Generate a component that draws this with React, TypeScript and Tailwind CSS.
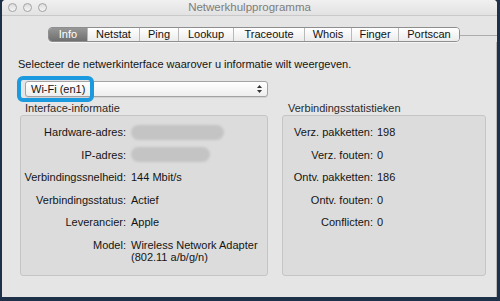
import React from "react";

const font = { fontFamily: '"Liberation Sans", Arial, sans-serif' };

const tabs = ["Info", "Netstat", "Ping", "Lookup", "Traceoute", "Whois", "Finger", "Portscan"];
const tabW = [38, 52, 39, 55, 71, 47, 47, 61];

function Blob({ w }: { w: number }) {
  return (
    <div className="h-[12px] flex items-center">
      <div
        className="h-[15px] rounded-full bg-[#c4c4c4] blur-[1px]"
        style={{ width: w }}
      />
    </div>
  );
}

export default function App() {
  const left: [string, React.ReactNode][] = [
    ["Hardware-adres:", <Blob w={93} />],
    ["IP-adres:", <Blob w={79} />],
    ["Verbindingssnelheid:", "144 Mbit/s"],
    ["Verbindingsstatus:", "Actief"],
    ["Leverancier:", "Apple"],
    [
      "Model:",
      <div>
        Wireless Network Adapter
        <br />
        (802.11 a/b/g/n)
      </div>,
    ],
  ];
  const right: [string, string][] = [
    ["Verz. pakketten:", "198"],
    ["Verz. fouten:", "0"],
    ["Ontv. pakketten:", "186"],
    ["Ontv. fouten:", "0"],
    ["Conflicten:", "0"],
  ];
  return (
    <div
      className="w-[500px] h-[301px] bg-[#1f3148] pl-[2px] pr-[3px] pb-[4px] flex text-[11px] text-[#141414]"
      style={font}
    >
      <div className="flex-1 flex flex-col bg-[#e5e5e5] rounded-t-[4px] overflow-hidden">
        {/* title bar */}
        <div className="h-[16px] shrink-0 bg-gradient-to-b from-[#f0f0f0] to-[#e2e2e2] border-b border-[#c9c9c9] flex items-center relative">
          <div className="flex gap-[6px] ml-[6px]">
            {[0, 1, 2].map((i) => (
              <div
                key={i}
                className="w-[9px] h-[9px] rounded-full border border-[#a2a2a2] bg-gradient-to-b from-[#dcdcdc] to-[#f6f6f6]"
              />
            ))}
          </div>
          <div className="absolute inset-0 flex items-center justify-center text-[11.5px] text-[#7d7d7d] leading-none">
            Netwerkhulpprogramma
          </div>
        </div>

        {/* tab bar */}
        <div className="mt-[11px] h-[15px] flex items-center">
          <div className="w-[46px]" />
          <div className="flex h-[15px] rounded-[4px] border border-[#8e8e8e] overflow-hidden shadow-[0_1px_0_rgba(255,255,255,0.6)]">
            {tabs.map((t, i) => (
              <div
                key={t}
                className={
                  i === 0
                    ? "flex items-center justify-center bg-gradient-to-b from-[#979797] to-[#6f6f6f] text-white leading-none"
                    : "flex items-center justify-center bg-gradient-to-b from-[#ffffff] to-[#ececec] leading-none border-l border-[#b9b9b9] text-[#111]"
                }
                style={{ width: tabW[i] }}
              >
                {t}
              </div>
            ))}
          </div>
          <div className="flex-1 h-px bg-[#acacac] mt-[1px]" />
        </div>

        {/* content */}
        <div className="flex-1 border-r border-[#b8b8b8] flex flex-col">
          <div className="mt-[16px] ml-[16px] leading-[13px]">
            Selecteer de netwerkinterface waarover u informatie wilt weergeven.
          </div>

          <div className="relative mt-[10px] ml-[23px] w-[243px] h-[16px]">
            <div className="h-full rounded-[3px] border border-[#a3a3a3] bg-gradient-to-b from-[#ffffff] to-[#eeeeee] flex items-center pl-[5px] leading-none shadow-[0_1px_0_rgba(0,0,0,0.08)]">
              <span className="flex-1">Wi-Fi (en1)</span>
              <div className="flex flex-col items-center gap-[2px] mr-[5px]">
                <svg width="5" height="3" viewBox="0 0 5 3">
                  <path d="M2.5 0L5 3H0z" fill="#333" />
                </svg>
                <svg width="5" height="3" viewBox="0 0 5 3">
                  <path d="M0 0h5L2.5 3z" fill="#333" />
                </svg>
              </div>
            </div>
            <div className="absolute left-[-8px] top-[-5px] w-[77px] h-[26px] rounded-[6px] border-[4px] border-[#1b9ae0]" />
          </div>

          <div className="flex mt-[5px]">
            {/* left group */}
            <div className="ml-[18px] w-[248px] flex flex-col">
              <div className="ml-[5px] leading-[12px] text-[#2a2a2a]">Interface-informatie</div>
              <div className="mt-[1px] h-[161px] rounded-[3px] border border-[#c5c5c5] bg-[#dcdcdc] pt-[10px]">
                <div className="grid grid-cols-[105px_1fr] gap-x-[5px] gap-y-[10.5px] leading-[12px]">
                  {left.map(([l, v], i) => (
                    <React.Fragment key={i}>
                      <div className="text-right">{l}</div>
                      <div>{v}</div>
                    </React.Fragment>
                  ))}
                </div>
              </div>
            </div>

            {/* right group */}
            <div className="ml-[14px] w-[204px] flex flex-col">
              <div className="ml-[6px] leading-[12px] text-[#2a2a2a]">Verbindingsstatistieken</div>
              <div className="mt-[1px] h-[161px] rounded-[3px] border border-[#c5c5c5] bg-[#dcdcdc] pt-[10px]">
                <div className="grid grid-cols-[90px_1fr] gap-x-[4px] gap-y-[10.5px] leading-[12px]">
                  {right.map(([l, v], i) => (
                    <React.Fragment key={i}>
                      <div className="text-right">{l}</div>
                      <div>{v}</div>
                    </React.Fragment>
                  ))}
                </div>
              </div>
            </div>
          </div>
        </div>
      </div>
    </div>
  );
}
